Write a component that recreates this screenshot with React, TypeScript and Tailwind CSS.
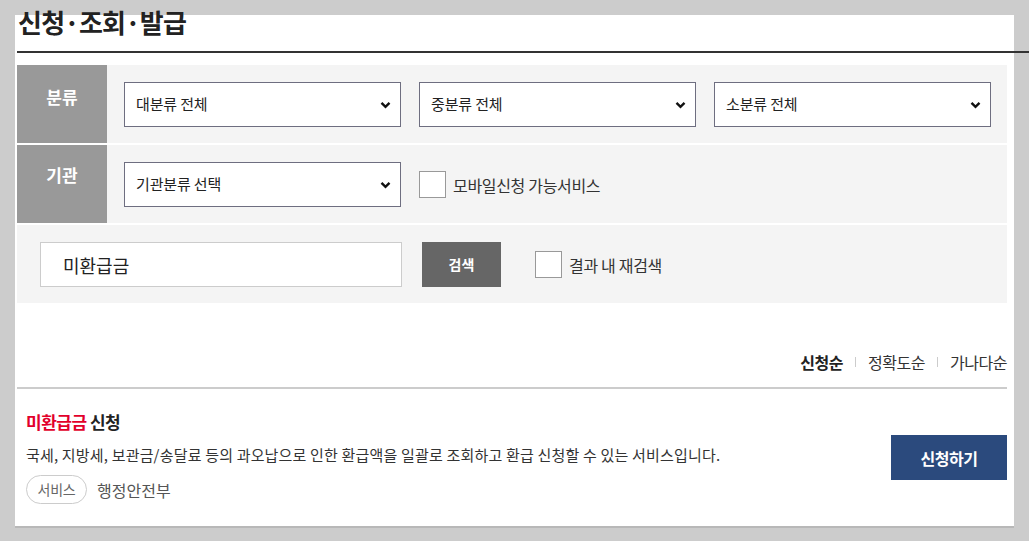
const FONT = "font-['Noto_Sans_CJK_KR','Noto_Sans',sans-serif]";

function Chevron() {
	return (
		<svg
			className="pointer-events-none absolute right-[9px] top-1/2 h-[8px] w-[11px] -translate-y-1/2"
			viewBox="0 0 11 8"
			fill="none"
		>
			<path d="M1.5 1.8 5.5 5.8 9.5 1.8" stroke="#111" strokeWidth="2.4" />
		</svg>
	);
}

function SelectBox({ label }: { label: string }) {
	return (
		<div className="relative h-[45px] w-[277px] border border-[#6e6e80] bg-white">
			<select
				defaultValue={label}
				className="h-full w-full appearance-none bg-transparent pl-[11px] text-[15px] tracking-[-0.01em] text-[#222] outline-none"
			>
				<option>{label}</option>
			</select>
			<Chevron />
		</div>
	);
}

function Check({ label }: { label: string }) {
	return (
		<label className="flex items-center gap-[7px] text-[16px] tracking-[-0.02em] text-[#333]">
			<span className="block h-[27px] w-[27px] border border-[#999] bg-white" />
			{label}
		</label>
	);
}

export default function App() {
	return (
		<div className={`min-h-screen bg-[#cccccc] pl-[15px] pt-[15px] ${FONT}`}>
			<div className="flow-root h-[511px] w-[999px] bg-white pl-[2px] shadow-[0_2px_0_#b8b8b8]">
				<h2 className="-mt-[15px] h-[53px] w-[1012px] border-b-2 border-[#333] pl-[1px] text-[26px] font-bold leading-[44px] tracking-[-0.03em] text-[#222]">
					신청·조회·발급
				</h2>

				<div className="mt-[12px] w-[990px] bg-[#f4f4f4]">
					<div className="flex h-[78px]">
						<div className="w-[90px] bg-[#999999] pt-[20px] text-center text-[17px] font-bold leading-[24px] text-white">
							분류
						</div>
						<div className="ml-[17px] mt-[17px] flex gap-[18px]">
							<SelectBox label="대분류 전체" />
							<SelectBox label="중분류 전체" />
							<SelectBox label="소분류 전체" />
						</div>
					</div>
					<div className="flex h-[80px] border-t-2 border-white">
						<div className="w-[90px] bg-[#999999] pt-[18px] text-center text-[17px] font-bold leading-[24px] text-white">
							기관
						</div>
						<div className="ml-[17px] mt-[17px] flex h-[45px] items-center gap-[18px]">
							<SelectBox label="기관분류 선택" />
							<Check label="모바일신청 가능서비스" />
						</div>
					</div>
					<div className="flex h-[80px] items-start border-t-2 border-white pl-[23px] pt-[17px]">
						<input
							defaultValue="미환급금"
							className="h-[45px] w-[362px] border border-[#cccccc] bg-white pl-[22px] text-[18px] text-[#222] outline-none"
						/>
						<button
							type="button"
							className="ml-[20px] h-[45px] w-[79px] bg-[#666666] text-[14px] font-bold text-white"
						>
							검색
						</button>
						<div className="ml-[34px] flex h-[45px] items-center">
							<Check label="결과 내 재검색" />
						</div>
					</div>
				</div>

				<div className="mt-[48px] flex w-[990px] items-center justify-end border-b-2 border-[#cccccc] pb-[14px] text-[16px] leading-[22px] tracking-[-0.03em] text-[#333]">
					<span className="font-bold text-[#222]">신청순</span>
					<span className="mx-[12px] h-[10px] w-px bg-[#cccccc]" />
					<span>정확도순</span>
					<span className="mx-[12px] h-[10px] w-px bg-[#cccccc]" />
					<span>가나다순</span>
				</div>

				<div className="flex w-[990px] items-start justify-between pl-[9px]">
					<div className="pt-[22px]">
						<h3 className="text-[17px] font-bold leading-[22px] tracking-[-0.03em] text-[#222]">
							<span className="text-[#e2002b]">미환급금</span> 신청
						</h3>
						<p className="mt-[11px] text-[15px] leading-[22px] tracking-[0.012em] text-[#333]">
							국세, 지방세, 보관금/송달료 등의 과오납으로 인한 환급액을 일괄로 조회하고 환급 신청할 수 있는 서비스입니다.
						</p>
						<div className="mt-[9px] flex items-center">
							<span className="flex h-[29px] w-[61px] items-center justify-center rounded-full border border-[#cccccc] text-[14px] tracking-[-0.02em] text-[#666]">
								서비스
							</span>
							<span className="ml-[10px] text-[16px] text-[#555]">행정안전부</span>
						</div>
					</div>
					<button
						type="button"
						className="mt-[46px] h-[45px] w-[116px] bg-[#2b4a7d] text-[16px] font-bold tracking-[-0.03em] text-white"
					>
						신청하기
					</button>
				</div>
			</div>
		</div>
	);
}
